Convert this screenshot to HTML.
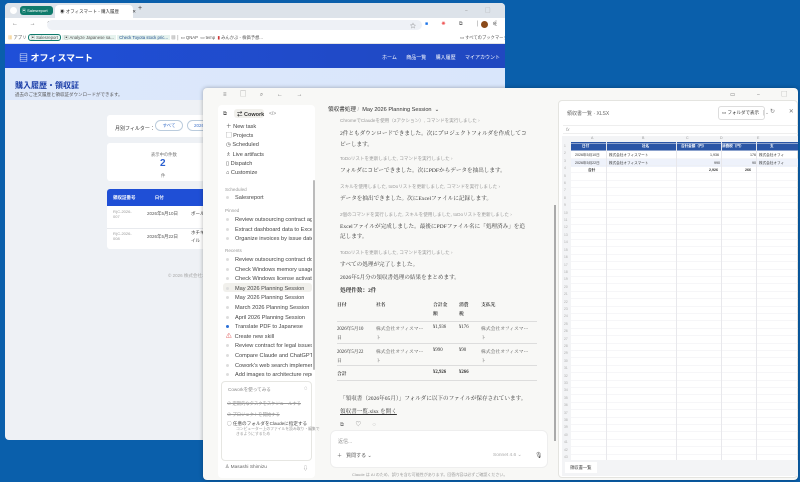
<!DOCTYPE html>
<html><head><meta charset="utf-8"><style>
*{margin:0;padding:0;box-sizing:border-box}
body{width:800px;height:482px;overflow:hidden;background:#0a5fab;font-family:"Liberation Sans","Noto Sans CJK JP",sans-serif;position:relative;color:#333}
.a{position:absolute;white-space:nowrap}
.br{left:5px;top:3px;width:500px;height:437px;background:#eef1f5;overflow:hidden;border-radius:4px}
.cl{left:203px;top:88px;width:595px;height:392px;background:#f8f8f6;border-radius:4px;overflow:hidden;box-shadow:0 0 4px rgba(0,0,0,.3)}
.sm{font-size:4.6px;color:#999}
.t7{font-size:5.6px;color:#333;font-family:"Liberation Serif","Noto Serif CJK SC",serif}
.si{font-size:5.6px;color:#444}
.dot{display:inline-block;width:3px;height:3px;border-radius:50%;background:#ddd;margin-right:6px;vertical-align:middle}
.gl{height:0;border-top:1px solid #e8eaee}
</style></head><body>
<!-- browser -->
<div class="a br">
 <div class="a" style="left:0;top:0;width:500px;height:15px;background:#dde3ea"></div>
 <div class="a" style="left:5px;top:4px;width:7px;height:7px;border-radius:50%;background:#fff"></div>
 <div class="a" style="left:15px;top:3px;width:33px;height:9px;border-radius:3px;background:#0f7b6c;color:#fff;font-size:4px;padding:2px 2px;overflow:hidden">▣ Salesreport</div>
 <div class="a" style="left:50px;top:2px;width:78px;height:13px;background:#fff;border-radius:4px 4px 0 0;font-size:4.5px;padding:4px 5px">◉ オフィスマート - 購入履歴 <span style="margin-left:12px">✕</span></div>
 <div class="a" style="left:133px;top:2px;font-size:7px;color:#444">+</div>
 <div class="a" style="left:460px;top:4px;font-size:5px;color:#888;letter-spacing:8px">− ▢ ✕</div>
 <div class="a" style="left:0;top:15px;width:500px;height:13px;background:#fff"></div>
 <div class="a" style="left:7px;top:17px;font-size:6px;color:#666;letter-spacing:5px">← → ⟳</div>
 <div class="a" style="left:42px;top:17px;width:375px;height:10px;border-radius:5px;background:#eef1f6"></div>
 <div class="a" style="left:405px;top:18px;font-size:6px;color:#666">☆</div>
 <div class="a" style="left:420px;top:18px;font-size:5px;color:#1a73e8;letter-spacing:6px">■ <span style="color:#e55">✺</span> <span style="color:#666">⧉ │ ⊛ │</span></div>
 <div class="a" style="left:476px;top:18px;width:7px;height:7px;border-radius:50%;background:#8a4a1a"></div>
 <div class="a" style="left:488px;top:17px;font-size:6px;color:#555">⋮</div>
 <div class="a" style="left:0;top:28px;width:500px;height:13px;background:#fff;border-bottom:1px solid #e3e3e3"></div>
 <div class="a" style="left:3px;top:30px;font-size:4.3px;color:#555;line-height:9px">
  <span style="color:#e8a020">▦</span> アプリ <span style="border:1px solid #0f7b6c;border-radius:3px;padding:0 2px;background:#e9f6f2">▣ Salesreport</span> <span style="background:#e6f3ee;padding:0 2px">▣ Analyze Japanese sa...</span> <span style="background:#e6f3ee;padding:0 2px;color:#1a4a8a">Check Toyota stock pric...</span> ▦ │ ▭ QNAP &nbsp;▭ temp &nbsp;<span style="color:#c33">▮</span> みんかぶ - 株価予想...</div>
 <div class="a" style="left:455px;top:32px;font-size:4.3px;color:#555">▭ すべてのブックマーク</div>
 <div class="a" style="left:0;top:41px;width:500px;height:24px;background:linear-gradient(90deg,#1f4fd8,#2048c0)"></div>
 <div class="a" style="left:14px;top:48px;font-size:9px;color:#fff;font-weight:bold">▤ オフィスマート</div>
 <div class="a" style="left:377px;top:51px;font-size:5px;color:#fff;word-spacing:8px">ホーム 商品一覧 購入履歴 マイアカウント</div>
 <div class="a" style="left:0;top:65px;width:500px;height:32px;background:linear-gradient(90deg,#dde8fb,#d9e6fb)"></div>
 <div class="a" style="left:10px;top:77px;font-size:8px;font-weight:bold;color:#1c3fa8">購入履歴・領収証</div>
 <div class="a" style="left:10px;top:89px;font-size:4.5px;color:#555">過去のご注文履歴と領収証ダウンロードができます。</div>
 <div class="a" style="left:102px;top:112px;width:120px;height:22px;background:#fff;border-radius:3px"></div>
 <div class="a" style="left:110px;top:122px;font-size:5px;color:#333">月別フィルター：</div>
 <div class="a" style="left:150px;top:117px;width:28px;height:11px;border:1px solid #bcd;border-radius:6px;font-size:4.5px;color:#47c;text-align:center;line-height:9px">すべて</div>
 <div class="a" style="left:182px;top:117px;width:40px;height:11px;border:1px solid #bcd;border-radius:6px;font-size:4.5px;color:#47c;padding-left:6px;line-height:9px">2026年5月</div>
 <div class="a" style="left:102px;top:140px;width:120px;height:38px;background:#fff;border-radius:3px"></div>
 <div class="a" style="left:146px;top:149px;font-size:4.3px;color:#777">表示中の件数</div>
 <div class="a" style="left:155px;top:155px;font-size:10px;color:#2a5fd0;font-weight:bold">2</div>
 <div class="a" style="left:156px;top:170px;font-size:4.3px;color:#777">件</div>
 <div class="a" style="left:102px;top:186px;width:120px;height:60px;background:#fff;border-radius:3px;overflow:hidden">
  <div style="height:17px;background:#1f4fd6;color:#fff;font-size:4.5px;font-weight:bold;padding:6px 6px;word-spacing:18px">領収証番号 日付 &nbsp;&nbsp;品名</div>
  <div class="a" style="left:6px;top:20px;font-size:4px;color:#999;line-height:5px">R(C-2026-<br>007</div>
  <div class="a" style="left:40px;top:22px;font-size:4.5px;color:#555">2026年5月10日</div>
  <div class="a" style="left:84px;top:22px;font-size:4.5px;color:#333">ボールペン</div>
  <div class="a" style="left:0;top:39px;width:120px" ><div class="gl"></div></div>
  <div class="a" style="left:6px;top:42px;font-size:4px;color:#999;line-height:5px">R(C-2026-<br>008</div>
  <div class="a" style="left:40px;top:45px;font-size:4.5px;color:#555">2026年5月22日</div>
  <div class="a" style="left:84px;top:40px;font-size:4.5px;color:#333;line-height:8px">ホチキス針<br>イル（20枚</div>
 </div>
 <div class="a" style="left:163px;top:270px;font-size:4.5px;color:#aaa">© 2026 株式会社オフィ</div>
</div>
<!-- claude window -->
<div class="a cl">
 <div class="a" style="left:20px;top:1px;font-size:6px;color:#777;letter-spacing:6px">≡ ▢ ⌕ ← →</div>
 <!-- sidebar -->
 <div class="a" style="left:15px;top:17px;width:97px;height:373px;background:#fff;border-radius:4px"></div>
 <div class="a" style="left:20px;top:23px;font-size:5.5px;color:#555">⧉</div>
 <div class="a" style="left:31px;top:21px;width:30px;height:9px;background:#f1f0ec;border-radius:3px;font-size:5.5px;font-weight:bold;color:#333;padding:1px 3px">⇄ Cowork</div>
 <div class="a" style="left:66px;top:23px;font-size:5px;color:#888">&lt;/&gt;</div>
 <div class="a si" style="left:23px;top:35px;line-height:9.2px">＋ New task<br>▢ Projects<br>◷ Scheduled<br>♗ Live artifacts<br>▯ Dispatch<br>⌂ Customize</div>
 <div class="a sm" style="left:22px;top:99px">Scheduled</div>
 <div class="a si" style="left:23px;top:107px"><span class="dot"></span>Salesreport</div>
 <div class="a sm" style="left:22px;top:120px">Pinned</div>
 <div class="a si" style="left:23px;top:128px;line-height:9.5px;width:86px;overflow:hidden"><span class="dot"></span>Review outsourcing contract agre<br><span class="dot"></span>Extract dashboard data to Excel fil<br><span class="dot"></span>Organize invoices by issue date</div>
 <div class="a sm" style="left:22px;top:160px">Recents</div>
 <div class="a" style="left:20px;top:195px;width:89px;height:9px;background:#f1f0ec;border-radius:3px"></div>
 <div class="a si" style="left:23px;top:168px;line-height:9.6px;width:86px;overflow:hidden"><span class="dot"></span>Review outsourcing contract docu<br><span class="dot"></span>Check Windows memory usage<br><span class="dot"></span>Check Windows license activation<br><span class="dot"></span>May 2026 Planning Session<br><span class="dot"></span>May 2026 Planning Session<br><span class="dot"></span>March 2026 Planning Session<br><span class="dot"></span>April 2026 Planning Session<br><span class="dot" style="background:#2a6fd6"></span>Translate PDF to Japanese<br><span style="color:#d55;margin-right:3px">⚠</span>Create new skill<br><span class="dot"></span>Review contract for legal issues<br><span class="dot"></span>Compare Claude and ChatGPT pric<br><span class="dot"></span>Cowork's web search implementatio<br><span class="dot"></span>Add images to architecture report</div>
 <div class="a" style="left:110px;top:92px;width:2px;height:190px;background:#bbb;border-radius:1px"></div>
 <div class="a" style="left:18px;top:293px;width:91px;height:80px;border:1px solid #e6e6e2;border-radius:4px;background:#fff"></div>
 <div class="a sm" style="left:25px;top:299px;color:#888">Coworkを使ってみる</div>
 <div class="a" style="left:101px;top:298px;font-size:6px;color:#666">◌</div>
 <div class="a" style="left:24px;top:310px;font-size:4.3px;color:#999;line-height:11px;text-decoration:line-through">⊘ 定期的なタスクをスケジュールする<br>⊘ プロジェクトを開始する</div>
 <div class="a" style="left:24px;top:333px;font-size:4.6px;color:#444">◯ 任意のフォルダをClaudeに指定する</div>
 <div class="a" style="left:33px;top:339px;font-size:3.8px;color:#999;line-height:5px">コンピューター上のファイルを読み取り・編集で<br>きるようにするため</div>
 <div class="a" style="left:22px;top:377px;font-size:4.8px;color:#666">♙ Masashi Shimizu</div>
 <div class="a" style="left:100px;top:377px;font-size:5px;color:#888">⇩</div>
 <!-- main -->
 <div class="a" style="left:125px;top:17px;font-size:5.6px;color:#333">領収書処理 <span style="color:#aaa">/</span> &nbsp;May 2026 Planning Session &nbsp;⌄</div>
 <div class="a sm" style="left:137px;top:30px">ChromeでClaudeを使用（2アクション）, コマンドを実行しました ›</div>
 <div class="a t7" style="left:137px;top:41px">2件ともダウンロードできました。次にプロジェクトフォルダを作成してコ</div>
 <div class="a t7" style="left:137px;top:52px">ピーします。</div>
 <div class="a sm" style="left:137px;top:68px">ToDoリストを更新しました, コマンドを実行しました ›</div>
 <div class="a t7" style="left:137px;top:78px">フォルダにコピーできました。次にPDFからデータを抽出します。</div>
 <div class="a sm" style="left:137px;top:96px">スキルを使用しました, toDoリストを更新しました, コマンドを実行しました ›</div>
 <div class="a t7" style="left:137px;top:106px">データを抽出できました。次にExcelファイルに記録します。</div>
 <div class="a sm" style="left:137px;top:124px">2個のコマンドを実行しました, スキルを使用しました, toDoリストを更新しました ›</div>
 <div class="a t7" style="left:137px;top:134px">Excelファイルが完成しました。最後にPDFファイル名に「処理済み」を追</div>
 <div class="a t7" style="left:137px;top:144px">記します。</div>
 <div class="a sm" style="left:137px;top:162px">ToDoリストを更新しました, コマンドを実行しました ›</div>
 <div class="a t7" style="left:137px;top:172px">すべての処理が完了しました。</div>
 <div class="a t7" style="left:137px;top:185px">2026年5月分の領収書処理の結果をまとめます。</div>
 <div class="a t7" style="left:137px;top:198px;font-weight:bold">処理件数：2件</div>
 <div class="a" style="left:134px;top:210px;width:200px;font-size:4.8px;color:#333;font-family:'Liberation Serif','Noto Serif CJK SC',serif">
  <div class="a" style="left:0;top:3px;font-weight:bold">日付</div><div class="a" style="left:39px;top:3px;font-weight:bold">社名</div><div class="a" style="left:96px;top:3px;font-weight:bold;line-height:9px">合計金<br>額</div><div class="a" style="left:122px;top:3px;font-weight:bold;line-height:9px">消費<br>税</div><div class="a" style="left:144px;top:3px;font-weight:bold">支払先</div>
  <div class="a" style="left:0;top:23px;width:200px;border-top:1px solid #ddd"></div>
  <div class="a" style="left:0;top:27px;line-height:9px">2026年5月10<br>日</div><div class="a" style="left:39px;top:27px;line-height:9px;color:#555">株式会社オフィスマー<br>ト</div><div class="a" style="left:96px;top:27px">¥1,936</div><div class="a" style="left:122px;top:27px">¥176</div><div class="a" style="left:144px;top:27px;line-height:9px;color:#555">株式会社オフィスマー<br>ト</div>
  <div class="a" style="left:0;top:45px;width:200px;border-top:1px solid #ddd"></div>
  <div class="a" style="left:0;top:50px;line-height:9px">2026年5月22<br>日</div><div class="a" style="left:39px;top:50px;line-height:9px;color:#555">株式会社オフィスマー<br>ト</div><div class="a" style="left:96px;top:50px">¥990</div><div class="a" style="left:122px;top:50px">¥90</div><div class="a" style="left:144px;top:50px;line-height:9px;color:#555">株式会社オフィスマー<br>ト</div>
  <div class="a" style="left:0;top:67px;width:200px;border-top:1px solid #ddd"></div>
  <div class="a" style="left:0;top:72px;font-weight:bold">合計</div><div class="a" style="left:96px;top:72px;font-weight:bold">¥2,926</div><div class="a" style="left:122px;top:72px;font-weight:bold">¥266</div>
  <div class="a" style="left:0;top:82px;width:200px;border-top:1px solid #ddd"></div>
 </div>
 <div class="a t7" style="left:137px;top:306px">「領収書（2026年05月）」フォルダに以下のファイルが保存されています。</div>
 <div class="a t7" style="left:137px;top:319px;text-decoration:underline">領収書一覧.xlsx を開く</div>
 <div class="a" style="left:137px;top:332px;font-size:5.5px;color:#777;letter-spacing:5px">⧉ ♡ ◌</div>
 <div class="a" style="left:127px;top:342px;width:218px;height:38px;background:#fff;border-radius:6px;border:1px solid #eee"></div>
 <div class="a" style="left:135px;top:350px;font-size:5px;color:#999">返信...</div>
 <div class="a" style="left:134px;top:364px;font-size:5px;color:#555">＋ &nbsp;&nbsp;質問する ⌄</div>
 <div class="a" style="left:290px;top:365px;font-size:4.8px;color:#aaa">Sonnet 4.6 ⌄</div>
 <div class="a" style="left:332px;top:364px;font-size:6px;color:#555">🎙</div>
 <div class="a" style="left:149px;top:384px;font-size:4px;color:#999">Claude は AI のため、誤りを含む可能性があります。回答内容は必ずご確認ください。</div>
 <!-- right panel -->
 <div class="a" style="left:351px;top:117px;width:2px;height:236px;background:#aaa"></div>
 <div class="a" style="left:527px;top:2px;font-size:5.5px;color:#777;letter-spacing:10px">▭ − ▢ ✕</div>
 <div class="a" style="left:355px;top:12px;width:240px;height:378px;background:#fff;border-radius:4px;border:1px solid #e4e4e0"></div>
 <div class="a" style="left:364px;top:22px;font-size:5px;color:#666">領収書一覧 · XLSX</div>
 <div class="a" style="left:515px;top:18px;width:47px;height:14px;border:1px solid #ddd;border-radius:3px;font-size:4.5px;color:#333;padding:3px 3px">▭ フォルダで表示 <span style="color:#888;margin-left:2px">│⌄</span></div>
 <div class="a" style="left:567px;top:20px;font-size:6px;color:#777;letter-spacing:6px">↻ ✕</div>
 <div class="a" style="left:360px;top:37px;width:235px;height:9px;border-top:1px solid #eee;border-bottom:1px solid #eee;font-size:4.5px;color:#999;padding:1px 3px"><i>fx</i></div>
 <div class="a" style="left:359px;top:48px;width:236px;height:324px;overflow:hidden;font-size:3.6px">
  <div class="a" style="left:0;top:0;width:236px;height:6px;background:#f3f4f6;color:#999"></div>
  <div class="a" style="left:0;top:0;width:9px;height:324px;background:#f3f4f6"></div>
  <div class="a" style="left:29px;top:0;color:#999">A</div><div class="a" style="left:80px;top:0;color:#999">B</div><div class="a" style="left:124px;top:0;color:#999">C</div><div class="a" style="left:158px;top:0;color:#999">D</div><div class="a" style="left:195px;top:0;color:#999">E</div>
  <div class="a" style="left:9px;top:6px;width:227px;height:9px;background:#2b56a6"></div>
  <div class="a" style="left:9px;top:23px;width:227px;height:7.5px;background:#eef2fb"></div>
  <div class="a" style="left:9px;top:6px;width:227px;height:318px;background:linear-gradient(90deg,transparent 35px,#e8e8ec 35px,#e8e8ec 36px,transparent 36px,transparent 105px,#e8e8ec 105px,#e8e8ec 106px,transparent 106px,transparent 150px,#e8e8ec 150px,#e8e8ec 151px,transparent 151px,transparent 185px,#e8e8ec 185px,#e8e8ec 186px,transparent 186px),repeating-linear-gradient(180deg,transparent 0,transparent 6.9px,#eceef2 6.9px,#eceef2 7.4px);background-position:0 1.5px"></div>
  <div class="a" style="left:20px;top:8px;color:#fff;font-weight:bold">日付</div><div class="a" style="left:80px;top:8px;color:#fff;font-weight:bold">社名</div><div class="a" style="left:119px;top:8px;color:#fff;font-weight:bold">合計金額（円）</div><div class="a" style="left:160px;top:8px;color:#fff;font-weight:bold">消費税（円）</div><div class="a" style="left:208px;top:8px;color:#fff;font-weight:bold">支</div>
  <div class="a" style="left:13px;top:17px;color:#333">2026年5月10日</div><div class="a" style="left:47px;top:17px;color:#333">株式会社オフィスマート</div><div class="a" style="left:148px;top:17px;color:#333">1,936</div><div class="a" style="left:188px;top:17px">176</div><div class="a" style="left:197px;top:17px">株式会社オフィ</div>
  <div class="a" style="left:13px;top:25px;color:#333">2026年5月22日</div><div class="a" style="left:47px;top:25px;color:#333">株式会社オフィスマート</div><div class="a" style="left:152px;top:25px">990</div><div class="a" style="left:190px;top:25px">90</div><div class="a" style="left:197px;top:25px">株式会社オフィ</div>
  <div class="a" style="left:26px;top:32px;font-weight:bold">合計</div><div class="a" style="left:147px;top:32px;font-weight:bold">2,926</div><div class="a" style="left:183px;top:32px;font-weight:bold">266</div>
  <div class="a" style="left:2px;top:7px;color:#aaa;line-height:7.4px;font-size:3.3px">1<br>2<br>3<br>4<br>5<br>6<br>7<br>8<br>9<br>10<br>11<br>12<br>13<br>14<br>15<br>16<br>17<br>18<br>19<br>20<br>21<br>22<br>23<br>24<br>25<br>26<br>27<br>28<br>29<br>30<br>31<br>32<br>33<br>34<br>35<br>36<br>37<br>38<br>39<br>40<br>41<br>42<br>43</div>
 </div>
 <div class="a" style="left:359px;top:372px;width:236px;height:16px;background:#f3f4f6"></div>
 <div class="a" style="left:362px;top:374px;width:32px;height:11px;background:#fff;font-size:4.3px;color:#444;padding:3px 5px">領収書一覧</div>
</div>
</body></html>
